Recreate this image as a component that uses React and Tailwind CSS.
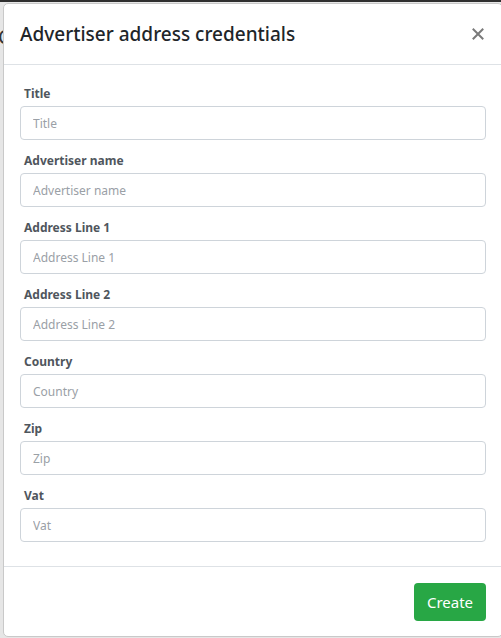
const fields = [
  'Title',
  'Advertiser name',
  'Address Line 1',
  'Address Line 2',
  'Country',
  'Zip',
  'Vat',
];

const App = () => {
  return (
    <div
      className="w-[501px] h-[638px] overflow-hidden bg-[#e6e6e6] border-t-2 border-[#2f2f2f] relative"
      style={{ fontFamily: '"Segoe UI", "Noto Sans", sans-serif' }}
    >
      <div className="absolute left-[-2px] top-[25px] text-[20px] text-[#333] leading-[20px]">C</div>
      <div className="relative ml-[3px] mt-[1px] w-[500px] h-[634px] bg-white border border-[#c9c9c9] rounded-[5px] flex flex-col">
        <div className="flex items-center justify-between px-[16px] py-[15px] border-b border-[#dee2e6]">
          <h5 className="text-[19px] leading-[30px] font-medium text-[#212529]">
            Advertiser address credentials
          </h5>
          <button className="mr-[2px] text-[#7a7a7a]">
            <svg width="12" height="12" viewBox="0 0 12 12" fill="none">
              <path d="M1.5 1.5 L10.5 10.5 M10.5 1.5 L1.5 10.5" stroke="currentColor" strokeWidth="2" strokeLinecap="square" />
            </svg>
          </button>
        </div>
        <div className="px-[16px] pt-[16px] pb-[16px]">
          {fields.map((f) => (
            <div key={f} className="pt-[3px] mb-[8px]">
              <label className="block pl-[4px] mb-[2px] text-[12px] leading-[20px] font-bold text-[#4f565d]">
                {f}
              </label>
              <input
                placeholder={f}
                className="block w-[466px] h-[34px] px-[12px] border border-[#ced4da] rounded-[4px] text-[12px] text-[#495057] placeholder:text-[#9aa0a6] outline-none"
              />
            </div>
          ))}
        </div>
        <div className="flex justify-end px-[16px] pt-[16px] pb-[15px] border-t border-[#dee2e6]">
          <button className="w-[72px] h-[38px] rounded-[4px] bg-[#28a745] text-white text-[15px]">
            Create
          </button>
        </div>
      </div>
    </div>
  );
};

export default App;
